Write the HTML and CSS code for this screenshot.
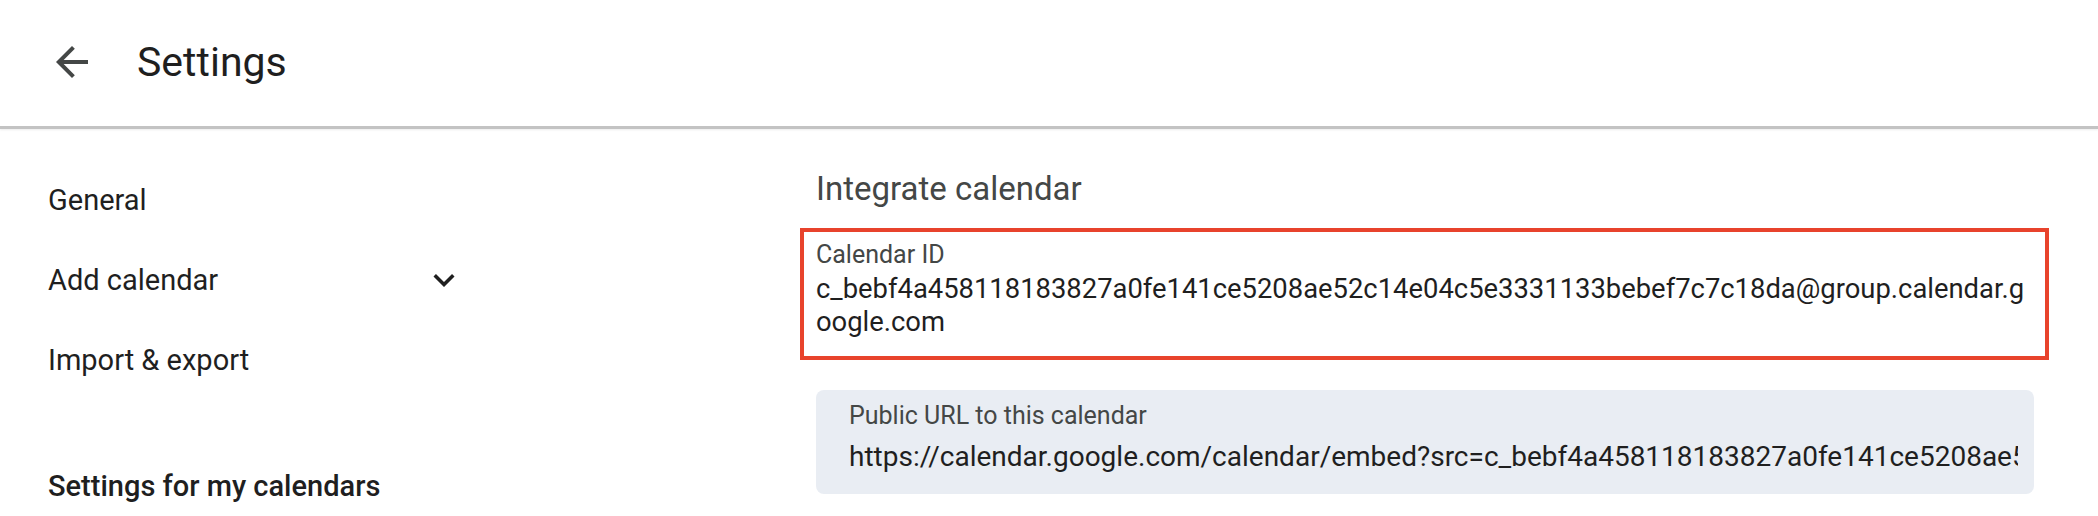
FILE: index.html
```html
<!DOCTYPE html>
<html lang="en">
<head>
<meta charset="utf-8">
<title>Settings</title>
<link rel="stylesheet" href="styles.css">
</head>
<body>
<header class="topbar">
  <button class="back" aria-label="Back">
    <svg viewBox="0 0 24 24" width="48" height="48"><path d="M20 11H7.83l5.59-5.59L12 4l-8 8 8 8 1.41-1.41L7.83 13H20v-2z"/></svg>
  </button>
  <h1 class="title">Settings</h1>
</header>
<main class="layout">
  <nav class="sidebar">
    <div class="nav-item">General</div>
    <div class="nav-item">Add calendar
      <svg class="chev" viewBox="0 0 24 24" width="42" height="42"><path d="M16.59 8.59L12 13.17 7.41 8.59 6 10l6 6 6-6z"/></svg>
    </div>
    <div class="nav-item">Import &amp; export</div>
    <div class="nav-heading">Settings for my calendars</div>
  </nav>
  <section class="content">
    <h2 class="section-title">Integrate calendar</h2>
    <div class="field highlight">
      <div class="label">Calendar ID</div>
      <div class="value wrap">c_bebf4a458118183827a0fe141ce5208ae52c14e04c5e3331133bebef7c7c18da@group.calendar.google.com</div>
    </div>
    <div class="field filled">
      <div class="label">Public URL to this calendar</div>
      <div class="value clip">https://calendar.google.com/calendar/embed?src=c_bebf4a458118183827a0fe141ce5208ae52c14e04c5e3331133bebef7c7c18da%40group.calendar.google.com&amp;ctz=America%2FNew_York</div>
    </div>
  </section>
</main>
</body>
</html>
```

FILE: styles.css
```css
* { box-sizing: border-box; }
html, body { margin: 0; padding: 0; background: #ffffff; }
body {
  font-family: Roboto, "Liberation Sans", sans-serif;
  color: #1f1f1f;
  width: 2098px;
  height: 516px;
  overflow: hidden;
}
.topbar {
  height: 129px;
  display: flex;
  align-items: center;
  padding: 0 0 3px 48px;
  border-bottom: 3px solid #c3c3c3;
  box-shadow: 0 1px 2px rgba(0,0,0,0.08);
}
.back {
  border: 0;
  background: none;
  padding: 0;
  width: 48px;
  height: 48px;
  display: flex;
  fill: #444746;
}
.title {
  margin: 0 0 0 41px;
  font-size: 41px;
  font-weight: 400;
  line-height: 48px;
  color: #1f1f1f;
}
.layout {
  display: flex;
}
.sidebar {
  width: 816px;
  flex-shrink: 0;
  padding: 31px 0 0 48px;
  display: flex;
  flex-direction: column;
}
.nav-item {
  width: 417px;
  height: 80px;
  line-height: 80px;
  font-size: 29px;
  display: flex;
  align-items: center;
  justify-content: space-between;
}
.chev { fill: #1f1f1f; }
.nav-heading {
  margin-top: 66px;
  font-size: 29px;
  font-weight: 500;
  line-height: 40px;
}
.content {
  width: 1218px;
  padding-top: 40px;
}
.section-title {
  margin: 0;
  font-size: 33px;
  font-weight: 400;
  line-height: 40px;
  color: #444746;
}
.field .label {
  font-size: 25px;
  line-height: 30px;
  color: #444746;
}
.field .value {
  font-size: 28px;
  line-height: 33px;
  color: #1f1f1f;
}
.highlight {
  margin: 19px -15px 0 -16px;
  border: 4px solid #e8432c;
  padding: 8px 11px 17px 12px;
}
.highlight .value {
  margin-top: 3px;
  font-size: 27.4px;
}
.wrap { word-break: break-all; }
.filled {
  margin-top: 30px;
  height: 104px;
  background: #e9edf3;
  border-radius: 8px;
  padding: 11px 16px 0 33px;
}
.clip {
  margin-top: 9px;
  white-space: nowrap;
  overflow: hidden;
}
```
